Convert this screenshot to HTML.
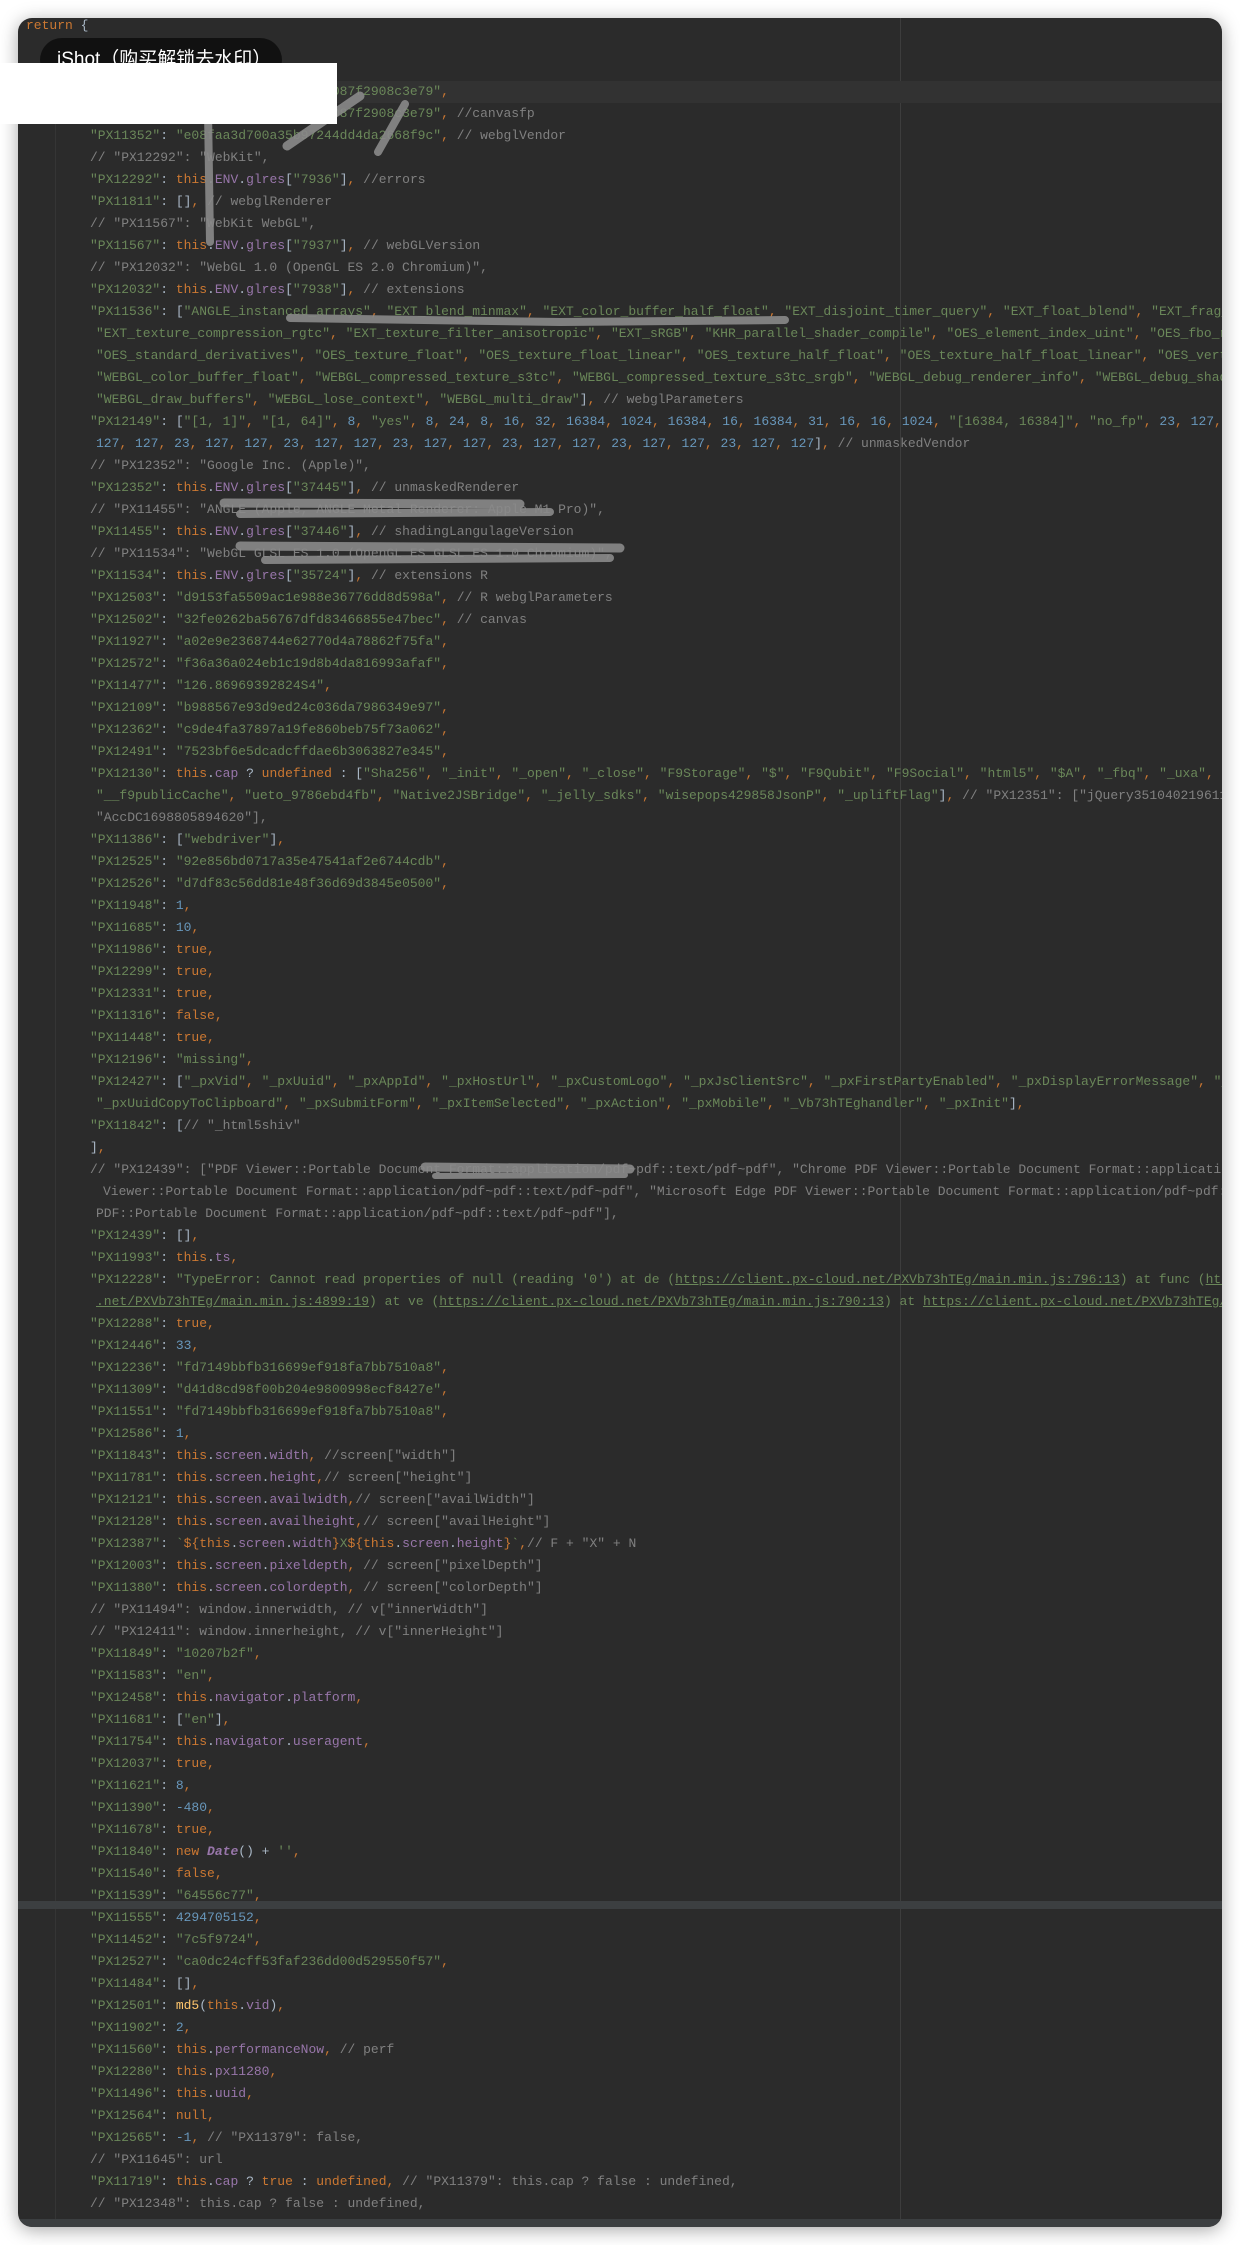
<!DOCTYPE html>
<html><head><meta charset="utf-8"><style>
html,body{margin:0;padding:0;background:#fff;width:1240px;height:2245px;overflow:hidden}
#w{position:absolute;left:18px;top:18px;width:1204px;height:2209px;background:#2b2b2b;border-radius:14px;overflow:hidden;box-shadow:0 3px 18px rgba(0,0,0,.35)}
#code{position:absolute;left:0;top:-3px;width:2400px;font-family:"Liberation Mono",monospace;font-size:13px;color:#a9b7c6}
#code div{height:22px;line-height:22px;white-space:pre;overflow:hidden}
.a{padding-left:8px}.t{padding-left:38px}.b{padding-left:72px}.c2{padding-left:78px}.c3{padding-left:85px}
.s{color:#6a8759}.o{color:#cc7832}.p{color:#9876aa}.n{color:#6897bb}.c{color:#808080}.f{color:#ffc66d}.u{color:#6a8759;text-decoration:underline}
.hl{background:#323232}
</style></head><body>
<div id="w">
<div style="position:absolute;left:37px;top:22px;width:1px;height:2180px;background:#353535"></div>
<div style="position:absolute;left:882px;top:0;width:1px;height:2209px;background:#3d3d3d"></div>
<div id="code"><div class="a"><span class="o">return</span> {</div><div class="t"><span class="s">"t"</span>: <span class="s">"PX12547"</span><span class="o">,</span> <span class="s">"d"</span>: {</div><div class="b"><span class="s">"PX11745"</span>: <span class="s">"1c0e"</span><span class="o">,</span></div><div class="b hl"><span class="s">"PX11398"</span>: <span class="s">"2b7d1e4a9f03c6b5e1d087f2908c3e79"</span><span class="o">,</span></div><div class="b"><span class="s">"PX11399"</span>: <span class="s">"2b7d1e4a9f03c6b5e1d087f2908c3e79"</span><span class="o">,</span> <span class="c">//canvasfp</span></div><div class="b"><span class="s">"PX11352"</span>: <span class="s">"e08faa3d700a35b97244dd4da2668f9c"</span><span class="o">,</span> <span class="c">// webglVendor</span></div><div class="b"><span class="c">// "PX12292": "WebKit",</span></div><div class="b"><span class="s">"PX12292"</span>: <span class="o">this</span>.<span class="p">ENV</span>.<span class="p">glres</span>[<span class="s">"7936"</span>]<span class="o">,</span> <span class="c">//errors</span></div><div class="b"><span class="s">"PX11811"</span>: []<span class="o">,</span> <span class="c">// webglRenderer</span></div><div class="b"><span class="c">// "PX11567": "WebKit WebGL",</span></div><div class="b"><span class="s">"PX11567"</span>: <span class="o">this</span>.<span class="p">ENV</span>.<span class="p">glres</span>[<span class="s">"7937"</span>]<span class="o">,</span> <span class="c">// webGLVersion</span></div><div class="b"><span class="c">// "PX12032": "WebGL 1.0 (OpenGL ES 2.0 Chromium)",</span></div><div class="b"><span class="s">"PX12032"</span>: <span class="o">this</span>.<span class="p">ENV</span>.<span class="p">glres</span>[<span class="s">"7938"</span>]<span class="o">,</span> <span class="c">// extensions</span></div><div class="b"><span class="s">"PX11536"</span>: [<span class="s">"ANGLE_instanced_arrays"</span><span class="o">,</span> <span class="s">"EXT_blend_minmax"</span><span class="o">,</span> <span class="s">"EXT_color_buffer_half_float"</span><span class="o">,</span> <span class="s">"EXT_disjoint_timer_query"</span><span class="o">,</span> <span class="s">"EXT_float_blend"</span><span class="o">,</span> <span class="s">"EXT_frag_depth"</span><span class="o">,</span></div><div class="c2"><span class="s">"EXT_texture_compression_rgtc"</span><span class="o">,</span> <span class="s">"EXT_texture_filter_anisotropic"</span><span class="o">,</span> <span class="s">"EXT_sRGB"</span><span class="o">,</span> <span class="s">"KHR_parallel_shader_compile"</span><span class="o">,</span> <span class="s">"OES_element_index_uint"</span><span class="o">,</span> <span class="s">"OES_fbo_render_mipmap"</span><span class="o">,</span></div><div class="c2"><span class="s">"OES_standard_derivatives"</span><span class="o">,</span> <span class="s">"OES_texture_float"</span><span class="o">,</span> <span class="s">"OES_texture_float_linear"</span><span class="o">,</span> <span class="s">"OES_texture_half_float"</span><span class="o">,</span> <span class="s">"OES_texture_half_float_linear"</span><span class="o">,</span> <span class="s">"OES_vertex_array_object"</span><span class="o">,</span></div><div class="c2"><span class="s">"WEBGL_color_buffer_float"</span><span class="o">,</span> <span class="s">"WEBGL_compressed_texture_s3tc"</span><span class="o">,</span> <span class="s">"WEBGL_compressed_texture_s3tc_srgb"</span><span class="o">,</span> <span class="s">"WEBGL_debug_renderer_info"</span><span class="o">,</span> <span class="s">"WEBGL_debug_shaders"</span><span class="o">,</span></div><div class="c2"><span class="s">"WEBGL_draw_buffers"</span><span class="o">,</span> <span class="s">"WEBGL_lose_context"</span><span class="o">,</span> <span class="s">"WEBGL_multi_draw"</span>]<span class="o">,</span> <span class="c">// webglParameters</span></div><div class="b"><span class="s">"PX12149"</span>: [<span class="s">"[1, 1]"</span><span class="o">,</span> <span class="s">"[1, 64]"</span><span class="o">,</span> <span class="n">8</span><span class="o">,</span> <span class="s">"yes"</span><span class="o">,</span> <span class="n">8</span><span class="o">,</span> <span class="n">24</span><span class="o">,</span> <span class="n">8</span><span class="o">,</span> <span class="n">16</span><span class="o">,</span> <span class="n">32</span><span class="o">,</span> <span class="n">16384</span><span class="o">,</span> <span class="n">1024</span><span class="o">,</span> <span class="n">16384</span><span class="o">,</span> <span class="n">16</span><span class="o">,</span> <span class="n">16384</span><span class="o">,</span> <span class="n">31</span><span class="o">,</span> <span class="n">16</span><span class="o">,</span> <span class="n">16</span><span class="o">,</span> <span class="n">1024</span><span class="o">,</span> <span class="s">"[16384, 16384]"</span><span class="o">,</span> <span class="s">"no_fp"</span><span class="o">,</span> <span class="n">23</span><span class="o">,</span> <span class="n">127</span><span class="o">,</span> <span class="n">127</span><span class="o">,</span></div><div class="c2"><span class="n">127</span><span class="o">,</span> <span class="n">127</span><span class="o">,</span> <span class="n">23</span><span class="o">,</span> <span class="n">127</span><span class="o">,</span> <span class="n">127</span><span class="o">,</span> <span class="n">23</span><span class="o">,</span> <span class="n">127</span><span class="o">,</span> <span class="n">127</span><span class="o">,</span> <span class="n">23</span><span class="o">,</span> <span class="n">127</span><span class="o">,</span> <span class="n">127</span><span class="o">,</span> <span class="n">23</span><span class="o">,</span> <span class="n">127</span><span class="o">,</span> <span class="n">127</span><span class="o">,</span> <span class="n">23</span><span class="o">,</span> <span class="n">127</span><span class="o">,</span> <span class="n">127</span><span class="o">,</span> <span class="n">23</span><span class="o">,</span> <span class="n">127</span><span class="o">,</span> <span class="n">127</span>]<span class="o">,</span> <span class="c">// unmaskedVendor</span></div><div class="b"><span class="c">// "PX12352": "Google Inc. (Apple)",</span></div><div class="b"><span class="s">"PX12352"</span>: <span class="o">this</span>.<span class="p">ENV</span>.<span class="p">glres</span>[<span class="s">"37445"</span>]<span class="o">,</span> <span class="c">// unmaskedRenderer</span></div><div class="b"><span class="c">// "PX11455": "ANGLE (Apple, ANGLE Metal Renderer: Apple M1 Pro)",</span></div><div class="b"><span class="s">"PX11455"</span>: <span class="o">this</span>.<span class="p">ENV</span>.<span class="p">glres</span>[<span class="s">"37446"</span>]<span class="o">,</span> <span class="c">// shadingLangulageVersion</span></div><div class="b"><span class="c">// "PX11534": "WebGL GLSL ES 1.0 (OpenGL ES GLSL ES 1.0 Chromium)",</span></div><div class="b"><span class="s">"PX11534"</span>: <span class="o">this</span>.<span class="p">ENV</span>.<span class="p">glres</span>[<span class="s">"35724"</span>]<span class="o">,</span> <span class="c">// extensions R</span></div><div class="b"><span class="s">"PX12503"</span>: <span class="s">"d9153fa5509ac1e988e36776dd8d598a"</span><span class="o">,</span> <span class="c">// R webglParameters</span></div><div class="b"><span class="s">"PX12502"</span>: <span class="s">"32fe0262ba56767dfd83466855e47bec"</span><span class="o">,</span> <span class="c">// canvas</span></div><div class="b"><span class="s">"PX11927"</span>: <span class="s">"a02e9e2368744e62770d4a78862f75fa"</span><span class="o">,</span></div><div class="b"><span class="s">"PX12572"</span>: <span class="s">"f36a36a024eb1c19d8b4da816993afaf"</span><span class="o">,</span></div><div class="b"><span class="s">"PX11477"</span>: <span class="s">"126.86969392824S4"</span><span class="o">,</span></div><div class="b"><span class="s">"PX12109"</span>: <span class="s">"b988567e93d9ed24c036da7986349e97"</span><span class="o">,</span></div><div class="b"><span class="s">"PX12362"</span>: <span class="s">"c9de4fa37897a19fe860beb75f73a062"</span><span class="o">,</span></div><div class="b"><span class="s">"PX12491"</span>: <span class="s">"7523bf6e5dcadcffdae6b3063827e345"</span><span class="o">,</span></div><div class="b"><span class="s">"PX12130"</span>: <span class="o">this</span>.<span class="p">cap</span> ? <span class="o">undefined</span> : [<span class="s">"Sha256"</span><span class="o">,</span> <span class="s">"_init"</span><span class="o">,</span> <span class="s">"_open"</span><span class="o">,</span> <span class="s">"_close"</span><span class="o">,</span> <span class="s">"F9Storage"</span><span class="o">,</span> <span class="s">"$"</span><span class="o">,</span> <span class="s">"F9Qubit"</span><span class="o">,</span> <span class="s">"F9Social"</span><span class="o">,</span> <span class="s">"html5"</span><span class="o">,</span> <span class="s">"$A"</span><span class="o">,</span> <span class="s">"_fbq"</span><span class="o">,</span> <span class="s">"_uxa"</span><span class="o">,</span></div><div class="c2"><span class="s">"__f9publicCache"</span><span class="o">,</span> <span class="s">"ueto_9786ebd4fb"</span><span class="o">,</span> <span class="s">"Native2JSBridge"</span><span class="o">,</span> <span class="s">"_jelly_sdks"</span><span class="o">,</span> <span class="s">"wisepops429858JsonP"</span><span class="o">,</span> <span class="s">"_upliftFlag"</span>]<span class="o">,</span> <span class="c">// "PX12351": ["jQuery351040219611</span></div><div class="c2"><span class="c">"AccDC1698805894620"],</span></div><div class="b"><span class="s">"PX11386"</span>: [<span class="s">"webdriver"</span>]<span class="o">,</span></div><div class="b"><span class="s">"PX12525"</span>: <span class="s">"92e856bd0717a35e47541af2e6744cdb"</span><span class="o">,</span></div><div class="b"><span class="s">"PX12526"</span>: <span class="s">"d7df83c56dd81e48f36d69d3845e0500"</span><span class="o">,</span></div><div class="b"><span class="s">"PX11948"</span>: <span class="n">1</span><span class="o">,</span></div><div class="b"><span class="s">"PX11685"</span>: <span class="n">10</span><span class="o">,</span></div><div class="b"><span class="s">"PX11986"</span>: <span class="o">true,</span></div><div class="b"><span class="s">"PX12299"</span>: <span class="o">true,</span></div><div class="b"><span class="s">"PX12331"</span>: <span class="o">true,</span></div><div class="b"><span class="s">"PX11316"</span>: <span class="o">false,</span></div><div class="b"><span class="s">"PX11448"</span>: <span class="o">true,</span></div><div class="b"><span class="s">"PX12196"</span>: <span class="s">"missing"</span><span class="o">,</span></div><div class="b"><span class="s">"PX12427"</span>: [<span class="s">"_pxVid"</span><span class="o">,</span> <span class="s">"_pxUuid"</span><span class="o">,</span> <span class="s">"_pxAppId"</span><span class="o">,</span> <span class="s">"_pxHostUrl"</span><span class="o">,</span> <span class="s">"_pxCustomLogo"</span><span class="o">,</span> <span class="s">"_pxJsClientSrc"</span><span class="o">,</span> <span class="s">"_pxFirstPartyEnabled"</span><span class="o">,</span> <span class="s">"_pxDisplayErrorMessage"</span><span class="o">,</span> <span class="s">"_pxReset"</span></div><div class="c2"><span class="s">"_pxUuidCopyToClipboard"</span><span class="o">,</span> <span class="s">"_pxSubmitForm"</span><span class="o">,</span> <span class="s">"_pxItemSelected"</span><span class="o">,</span> <span class="s">"_pxAction"</span><span class="o">,</span> <span class="s">"_pxMobile"</span><span class="o">,</span> <span class="s">"_Vb73hTEghandler"</span><span class="o">,</span> <span class="s">"_pxInit"</span>]<span class="o">,</span></div><div class="b"><span class="s">"PX11842"</span>: [<span class="c">// "_html5shiv"</span></div><div class="b">]<span class="o">,</span></div><div class="b"><span class="c">// "PX12439": ["PDF Viewer::Portable Document Format::application/pdf~pdf::text/pdf~pdf", "Chrome PDF Viewer::Portable Document Format::application/pdf~pdf</span></div><div class="c3"><span class="c">Viewer::Portable Document Format::application/pdf~pdf::text/pdf~pdf", "Microsoft Edge PDF Viewer::Portable Document Format::application/pdf~pdf::text</span></div><div class="c2"><span class="c">PDF::Portable Document Format::application/pdf~pdf::text/pdf~pdf"],</span></div><div class="b"><span class="s">"PX12439"</span>: []<span class="o">,</span></div><div class="b"><span class="s">"PX11993"</span>: <span class="o">this</span>.<span class="p">ts</span><span class="o">,</span></div><div class="b"><span class="s">"PX12228"</span>: <span class="s">"TypeError: Cannot read properties of null (reading '0') at de (</span><span class="u">https://client.px-cloud.net/PXVb73hTEg/main.min.js:796:13</span><span class="s">) at func (</span><span class="u">https://client.px-cloud</span></div><div class="c2"><span class="u">.net/PXVb73hTEg/main.min.js:4899:19</span><span class="s">) at ve (</span><span class="u">https://client.px-cloud.net/PXVb73hTEg/main.min.js:790:13</span><span class="s">) at </span><span class="u">https://client.px-cloud.net/PXVb73hTEg/main.min.js</span></div><div class="b"><span class="s">"PX12288"</span>: <span class="o">true,</span></div><div class="b"><span class="s">"PX12446"</span>: <span class="n">33</span><span class="o">,</span></div><div class="b"><span class="s">"PX12236"</span>: <span class="s">"fd7149bbfb316699ef918fa7bb7510a8"</span><span class="o">,</span></div><div class="b"><span class="s">"PX11309"</span>: <span class="s">"d41d8cd98f00b204e9800998ecf8427e"</span><span class="o">,</span></div><div class="b"><span class="s">"PX11551"</span>: <span class="s">"fd7149bbfb316699ef918fa7bb7510a8"</span><span class="o">,</span></div><div class="b"><span class="s">"PX12586"</span>: <span class="n">1</span><span class="o">,</span></div><div class="b"><span class="s">"PX11843"</span>: <span class="o">this</span>.<span class="p">screen</span>.<span class="p">width</span><span class="o">,</span> <span class="c">//screen["width"]</span></div><div class="b"><span class="s">"PX11781"</span>: <span class="o">this</span>.<span class="p">screen</span>.<span class="p">height</span><span class="o">,</span><span class="c">// screen["height"]</span></div><div class="b"><span class="s">"PX12121"</span>: <span class="o">this</span>.<span class="p">screen</span>.<span class="p">availwidth</span><span class="o">,</span><span class="c">// screen["availWidth"]</span></div><div class="b"><span class="s">"PX12128"</span>: <span class="o">this</span>.<span class="p">screen</span>.<span class="p">availheight</span><span class="o">,</span><span class="c">// screen["availHeight"]</span></div><div class="b"><span class="s">"PX12387"</span>: <span class="s">`</span><span class="o">${this</span>.<span class="p">screen</span>.<span class="p">width</span><span class="o">}</span><span class="s">X</span><span class="o">${this</span>.<span class="p">screen</span>.<span class="p">height</span><span class="o">}</span><span class="s">`</span><span class="o">,</span><span class="c">// F + "X" + N</span></div><div class="b"><span class="s">"PX12003"</span>: <span class="o">this</span>.<span class="p">screen</span>.<span class="p">pixeldepth</span><span class="o">,</span> <span class="c">// screen["pixelDepth"]</span></div><div class="b"><span class="s">"PX11380"</span>: <span class="o">this</span>.<span class="p">screen</span>.<span class="p">colordepth</span><span class="o">,</span> <span class="c">// screen["colorDepth"]</span></div><div class="b"><span class="c">// "PX11494": window.innerwidth, // v["innerWidth"]</span></div><div class="b"><span class="c">// "PX12411": window.innerheight, // v["innerHeight"]</span></div><div class="b"><span class="s">"PX11849"</span>: <span class="s">"10207b2f"</span><span class="o">,</span></div><div class="b"><span class="s">"PX11583"</span>: <span class="s">"en"</span><span class="o">,</span></div><div class="b"><span class="s">"PX12458"</span>: <span class="o">this</span>.<span class="p">navigator</span>.<span class="p">platform</span><span class="o">,</span></div><div class="b"><span class="s">"PX11681"</span>: [<span class="s">"en"</span>]<span class="o">,</span></div><div class="b"><span class="s">"PX11754"</span>: <span class="o">this</span>.<span class="p">navigator</span>.<span class="p">useragent</span><span class="o">,</span></div><div class="b"><span class="s">"PX12037"</span>: <span class="o">true,</span></div><div class="b"><span class="s">"PX11621"</span>: <span class="n">8</span><span class="o">,</span></div><div class="b"><span class="s">"PX11390"</span>: <span class="n">-480</span><span class="o">,</span></div><div class="b"><span class="s">"PX11678"</span>: <span class="o">true,</span></div><div class="b"><span class="s">"PX11840"</span>: <span class="o">new</span> <i><b class="p">Date</b></i>() + <span class="s">''</span><span class="o">,</span></div><div class="b"><span class="s">"PX11540"</span>: <span class="o">false,</span></div><div class="b"><span class="s">"PX11539"</span>: <span class="s">"64556c77"</span><span class="o">,</span></div><div class="b"><span class="s">"PX11555"</span>: <span class="n">4294705152</span><span class="o">,</span></div><div class="b"><span class="s">"PX11452"</span>: <span class="s">"7c5f9724"</span><span class="o">,</span></div><div class="b"><span class="s">"PX12527"</span>: <span class="s">"ca0dc24cff53faf236dd00d529550f57"</span><span class="o">,</span></div><div class="b"><span class="s">"PX11484"</span>: []<span class="o">,</span></div><div class="b"><span class="s">"PX12501"</span>: <span class="f">md5</span>(<span class="o">this</span>.<span class="p">vid</span>)<span class="o">,</span></div><div class="b"><span class="s">"PX11902"</span>: <span class="n">2</span><span class="o">,</span></div><div class="b"><span class="s">"PX11560"</span>: <span class="o">this</span>.<span class="p">performanceNow</span><span class="o">,</span> <span class="c">// perf</span></div><div class="b"><span class="s">"PX12280"</span>: <span class="o">this</span>.<span class="p">px11280</span><span class="o">,</span></div><div class="b"><span class="s">"PX11496"</span>: <span class="o">this</span>.<span class="p">uuid</span><span class="o">,</span></div><div class="b"><span class="s">"PX12564"</span>: <span class="o">null,</span></div><div class="b"><span class="s">"PX12565"</span>: <span class="n">-1</span><span class="o">,</span> <span class="c">// "PX11379": false,</span></div><div class="b"><span class="c">// "PX11645": url</span></div><div class="b"><span class="s">"PX11719"</span>: <span class="o">this</span>.<span class="p">cap</span> ? <span class="o">true</span> : <span class="o">undefined,</span> <span class="c">// "PX11379": this.cap ? false : undefined,</span></div><div class="b"><span class="c">// "PX12348": this.cap ? false : undefined,</span></div></div>
<div style="position:absolute;left:0;top:1883px;width:1204px;height:8px;background:#3c3f41"></div>
<div style="position:absolute;left:0;top:2201px;width:1204px;height:8px;background:#3c3f41"></div>
</div>
<svg width="1240" height="2245" style="position:absolute;left:0;top:0" xmlns="http://www.w3.org/2000/svg">
<g stroke="#8a8a8a" stroke-linecap="round" fill="none" opacity="0.9">
<path d="M208 110 L210 242" stroke-width="8"/>
<path d="M287 146 L360 96" stroke-width="9"/>
<path d="M378 152 L405 104" stroke-width="8"/>
<path d="M290 318 L560 322 L785 320" stroke-width="8"/>
<path d="M224 503 L520 504" stroke-width="9"/>
<path d="M240 514 L550 512" stroke-width="8"/>
<path d="M240 546 L620 548" stroke-width="9"/>
<path d="M265 560 L610 558" stroke-width="8"/>
<path d="M425 1167 L630 1169" stroke-width="9"/>
<path d="M435 1176 L625 1175" stroke-width="6"/>
</g>
</svg>
<div style="position:absolute;left:40px;top:38px;width:242px;height:44px;border-radius:22px;background:#111;color:#fff;font-family:'Liberation Sans','Noto Sans CJK SC',sans-serif;font-size:19px;line-height:44px;padding-left:17px;box-sizing:border-box;white-space:nowrap;overflow:hidden">iShot（购买解锁去水印）</div>
<div style="position:absolute;left:0;top:63px;width:337px;height:61px;background:#fff"></div>
</body></html>
